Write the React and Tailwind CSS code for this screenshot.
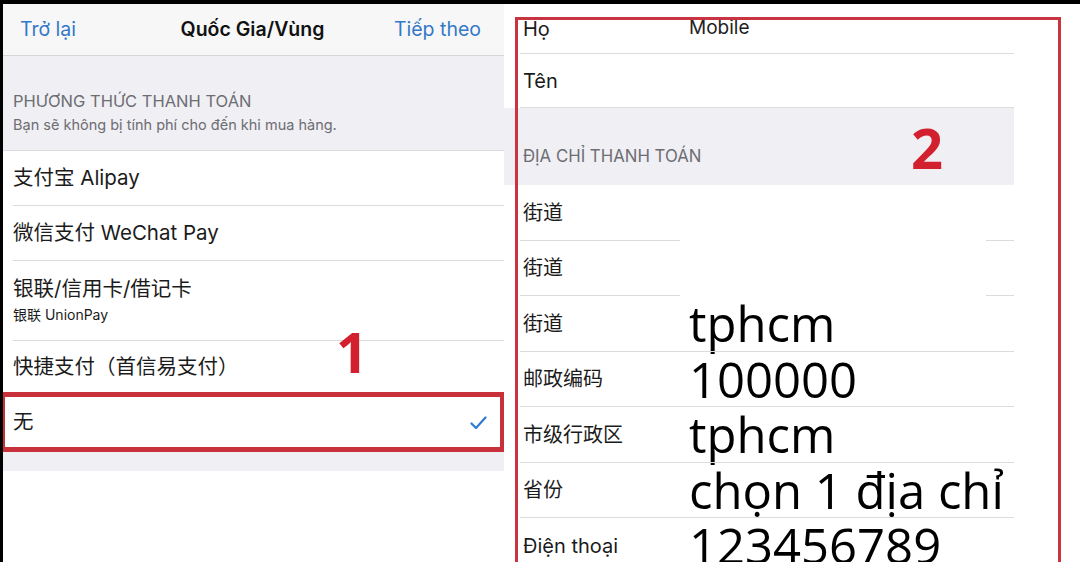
import React from "react";

const FONT = { fontFamily: 'Inter, "Noto Sans CJK SC", sans-serif' };
const BIG = { fontFamily: '"Open Sans", "Noto Sans", sans-serif' };

const LeftRow = ({ h, children }) => (
  <div className={`bg-white pl-[10px] ${h}`}>
    <div className="h-full flex flex-col justify-center border-b border-[#dcdcdf]">{children}</div>
  </div>
);

const RightRow = ({ label, value, h = "h-[55.5px]", split }) => (
  <div className={`bg-white pl-[16px] ${h}`}>
    <div className="relative h-full flex items-center">
      <div className="w-[169px] pl-[3px] text-[20px] text-[#1b1b1b] shrink-0">{label}</div>
      {value && (
        <div className="text-[49px] leading-none text-black whitespace-nowrap" style={BIG}>
          {value}
        </div>
      )}
      {split ? (
        <>
          <div className="absolute left-0 bottom-0 w-[160px] h-px bg-[#dcdcdf]" />
          <div className="absolute right-0 bottom-0 w-[28px] h-px bg-[#dcdcdf]" />
        </>
      ) : (
        <div className="absolute left-0 right-0 bottom-0 h-px bg-[#dcdcdf]" />
      )}
    </div>
  </div>
);

export default function App() {
  return (
    <div
      className="relative w-[1080px] h-[562px] overflow-hidden bg-white border-t-[4px] border-l-[3px] border-black flex"
      style={FONT}
    >
      {/* left screenshot */}
      <div className="w-[501px] h-full flex flex-col">
        <div className="h-[52px] bg-[#f7f7f7] border-b border-[#d6d6d9] grid grid-cols-[1fr_auto_1fr] items-center pl-[17px] pr-[23px] text-[19.5px]">
          <span className="text-[#3478c7]">Trở lại</span>
          <span className="font-semibold text-[#111] pl-[4px]">Quốc Gia/Vùng</span>
          <span className="text-[#3478c7] text-right">Tiếp theo</span>
        </div>
        <div className="h-[95px] bg-[#efeff4] border-b border-[#dcdcdf] flex flex-col justify-end pl-[10px] pb-[15px]">
          <div className="text-[16.5px] text-[#6d6d72] leading-5">PHƯƠNG THỨC THANH TOÁN</div>
          <div className="text-[14.5px] text-[#6d6d72] leading-5 mt-[4px]">Bạn sẽ không bị tính phí cho đến khi mua hàng.</div>
        </div>
        <LeftRow h="h-[55px]">
          <span className="text-[20.5px] text-[#1b1b1b]">支付宝 Alipay</span>
        </LeftRow>
        <LeftRow h="h-[55px]">
          <span className="text-[20.5px] text-[#1b1b1b]">微信支付 WeChat Pay</span>
        </LeftRow>
        <LeftRow h="h-[80px]">
          <span className="text-[20.5px] text-[#1b1b1b] leading-6">银联/信用卡/借记卡</span>
          <span className="text-[14px] text-[#1b1b1b] leading-5 mt-[4px]">银联 UnionPay</span>
        </LeftRow>
        <LeftRow h="h-[54px]">
          <span className="text-[20.5px] text-[#1b1b1b]">快捷支付（首信易支付）</span>
        </LeftRow>
        <div className="relative h-[55px] bg-white pl-[10px] pr-[17px] flex items-center justify-between">
          <span className="text-[20.5px] text-[#1b1b1b]">无</span>
          <svg width="17" height="14" viewBox="0 0 17 14" fill="none">
            <path d="M1.5 7.5 L6 12 L15.5 1.5" stroke="#2f7bd0" strokeWidth="2.2" strokeLinecap="round" strokeLinejoin="round" />
          </svg>
          <div className="absolute -left-[3px] -right-[1px] -top-[3px] -bottom-[2px] border-[5px] border-[#c8313a]" />
        </div>
        <div className="h-[21px] bg-[#efeff4]" />
        <div className="flex-1 bg-white" />
      </div>

      {/* right screenshot */}
      <div className="relative flex-1 h-full">
        <div className="w-[510px]">
          <RightRow label="Họ" h="h-[50px]" />
          <RightRow label="Tên" h="h-[54px]" />
          <div className="h-[77px] bg-[#efeff4] flex items-end pl-[19px] pb-[16px]">
            <span className="text-[16.8px] text-[#6d6d72]">ĐỊA CHỈ THANH TOÁN</span>
          </div>
          <RightRow label="街道" split />
          <RightRow label="街道" split />
          <RightRow label="街道" value="tphcm" />
          <RightRow label="邮政编码" value="100000" />
          <RightRow label="市级行政区" value="tphcm" />
          <RightRow label="省份" value="chọn 1 địa chỉ" />
          <RightRow label="Điện thoại" value="123456789" />
        </div>
        <span className="absolute left-[185px] top-[10px] text-[19px] text-[#222]">Mobile</span>
        <div className="absolute left-[11px] top-[13px] w-[546px] h-[600px] border-[3px] border-[#c8343f]" />
      </div>

      <span
        className="absolute left-[333px] top-[319px] text-[56px] leading-none font-bold text-[#d2202e]"
        style={{ fontFamily: '"Open Sans", sans-serif' }}
      >
        1
      </span>
      <span
        className="absolute left-[908px] top-[115px] text-[56px] leading-none font-bold text-[#d2202e]"
        style={{ fontFamily: '"Open Sans", sans-serif' }}
      >
        2
      </span>
    </div>
  );
}
